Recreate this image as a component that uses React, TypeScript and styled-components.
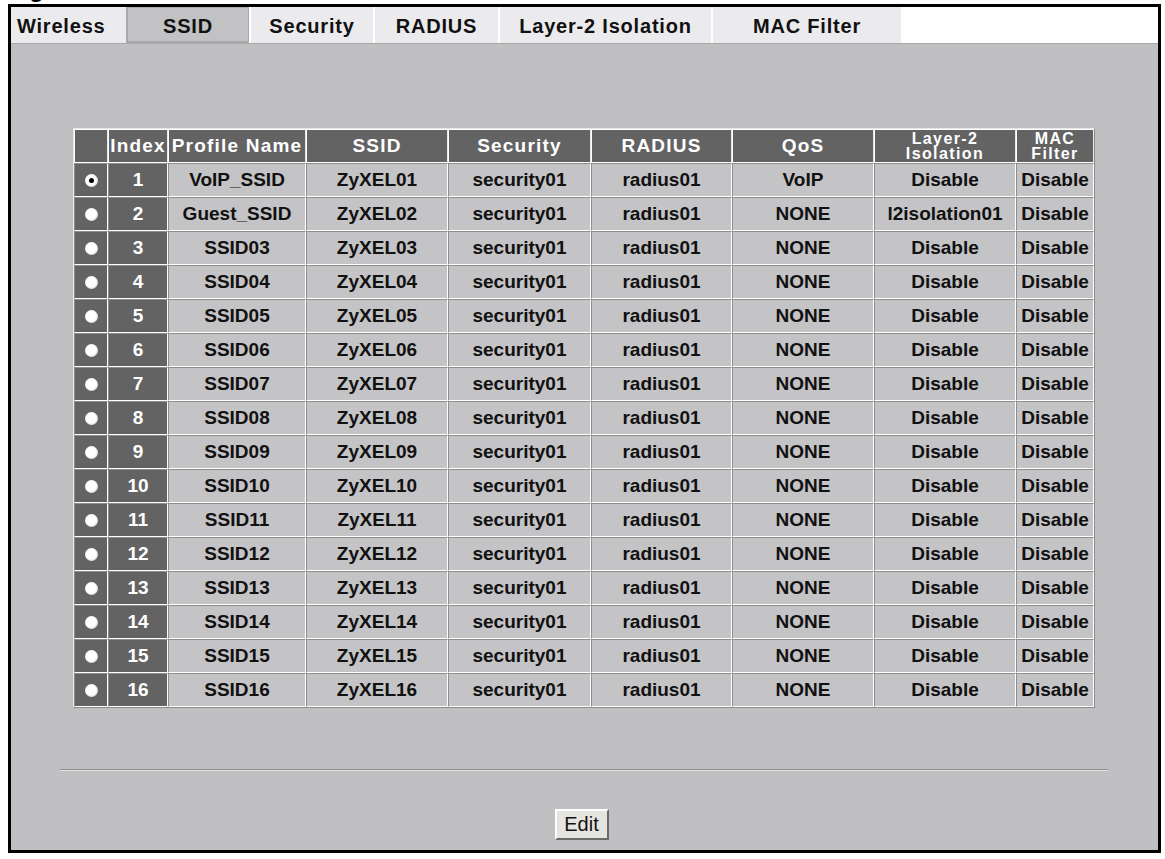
import React from "react";
import styled, { createGlobalStyle } from "styled-components";

const Global = createGlobalStyle`
  html, body { margin: 0; padding: 0; background: #ffffff; }
  body { font-family: "Liberation Sans", Arial, sans-serif; }
`;

const Page = styled.div`
  width: 1165px;
  height: 859px;
  position: relative;
  overflow: hidden;
  background: #fff;
`;

const Caption = styled.div`
  position: absolute;
  left: 8px;
  top: -23px;
  font: bold 24px/1 "Liberation Sans", Arial, sans-serif;
  color: #000;
`;

const Frame = styled.div`
  position: absolute;
  left: 8px;
  top: 4px;
  width: 1147px;
  height: 843px;
  border: 3px solid #000;
  display: flex;
  flex-direction: column;
  background: #c0bfc2;
`;

const TabBar = styled.div`
  display: flex;
  height: 36px;
  background: #ffffff;
  border-bottom: 1px solid #a8a8a8;
`;

const Tab = styled.div<{ $w: number; $active?: boolean }>`
  width: ${(p) => p.$w}px;
  box-sizing: border-box;
  display: flex;
  align-items: center;
  justify-content: center;
  padding-top: 3px;
  font: bold 20px "Liberation Sans", Arial, sans-serif;
  letter-spacing: 0.8px;
  color: #111;
  background: ${(p) => (p.$active ? "#c2c1c4" : "#ebeaec")};
  border-left: 2px solid ${(p) => (p.$active ? "#a9a9ab" : "#ffffff")};
  border-right: ${(p) => (p.$active ? "1px solid #a9a9ab" : "none")};
  border-top: ${(p) => (p.$active ? "1px solid #a9a9ab" : "none")};
  border-bottom: ${(p) => (p.$active ? "2px solid #a9a9ab" : "none")};
  &:first-child { border-left: none; justify-content: flex-start; padding-left: 6px; }
`;

const Content = styled.div`
  flex: 1;
  display: flex;
  flex-direction: column;
  align-items: stretch;
  padding: 84px 0 0 0;
`;

const TableWrap = styled.div`
  margin-left: 62px;
`;

const Table = styled.table`
  border-collapse: separate;
  border-spacing: 0;
  border: 1px solid #e6e6e6;
  border-right-color: #8a8a8a;
  border-bottom-color: #8a8a8a;
  table-layout: fixed;
`;

const Th = styled.th<{ $w: number }>`
  width: ${(p) => p.$w - 2}px;
  height: 32px;
  padding: 0;
  background: #636363;
  color: #ffffff;
  font: bold 19px "Liberation Sans", Arial, sans-serif;
  letter-spacing: 1.2px;
  text-align: center;
  border: 1px solid #ffffff;
  border-right-color: #e8e8e8;
  white-space: nowrap;
  overflow: hidden;
`;

const HeadLine = styled.div<{ $small?: boolean }>`
  font-size: ${(p) => (p.$small ? "16px" : "19px")};
  letter-spacing: ${(p) => (p.$small ? "1.4px" : "1.2px")};
  line-height: ${(p) => (p.$small ? "15px" : "20px")};
`;

const Td = styled.td<{ $dark?: boolean }>`
  height: 32px;
  padding: 0;
  background: ${(p) => (p.$dark ? "#636363" : "#c4c3c6")};
  color: ${(p) => (p.$dark ? "#ffffff" : "#111111")};
  font: bold 19px "Liberation Sans", Arial, sans-serif;
  text-align: center;
  border: 1px solid #ffffff;
  border-left-color: #8e8e8e;
  border-top-color: #8e8e8e;
  white-space: nowrap;
  overflow: hidden;
`;

const Radio = styled.span<{ $on?: boolean }>`
  display: inline-block;
  width: 13px;
  height: 13px;
  border-radius: 50%;
  background: radial-gradient(circle at 45% 45%, #ffffff 50%, #cfcfcf 80%, #9a9a9a 100%);
  position: relative;
  vertical-align: middle;
  &::after {
    content: "";
    display: ${(p) => (p.$on ? "block" : "none")};
    position: absolute;
    left: 4px;
    top: 4px;
    width: 5px;
    height: 5px;
    border-radius: 50%;
    background: #000;
  }
`;

const Rule = styled.div`
  margin: 61px 0 0 49px;
  width: 1048px;
  height: 0;
  border-top: 1px solid #8c8c8c;
  border-bottom: 1px solid #e4e4e4;
`;

const ButtonRow = styled.div`
  display: flex;
  justify-content: center;
  padding-top: 38px;
  padding-right: 6px;
`;

const Button = styled.button`
  width: 54px;
  height: 31px;
  background: #e6e4e0;
  border: 2px solid;
  border-color: #ffffff #6a6a6a #6a6a6a #ffffff;
  font: 20px "Liberation Sans", Arial, sans-serif;
  color: #111;
  padding: 0;
`;

const cols = [
  { t: "", w: 34 },
  { t: "Index", w: 60 },
  { t: "Profile Name", w: 138 },
  { t: "SSID", w: 142 },
  { t: "Security", w: 143 },
  { t: "RADIUS", w: 141 },
  { t: "QoS", w: 142 },
  { t: "Layer-2\nIsolation", w: 142 },
  { t: "MAC\nFilter", w: 78 },
];

const pad = (n: number) => (n < 10 ? "0" + n : "" + n);

const rows = Array.from({ length: 16 }, (_, i) => {
  const n = i + 1;
  return {
    n,
    name: n === 1 ? "VoIP_SSID" : n === 2 ? "Guest_SSID" : "SSID" + pad(n),
    ssid: "ZyXEL" + pad(n),
    sec: "security01",
    rad: "radius01",
    qos: n === 1 ? "VoIP" : "NONE",
    l2: n === 2 ? "l2isolation01" : "Disable",
    mac: "Disable",
  };
});

const tabs = [
  { t: "Wireless", w: 115 },
  { t: "SSID", w: 123, a: true },
  { t: "Security", w: 124 },
  { t: "RADIUS", w: 125 },
  { t: "Layer-2 Isolation", w: 213 },
  { t: "MAC Filter", w: 190 },
];

export default function App() {
  return (
    <Page>
      <Global />
      <Caption>Figure</Caption>
      <Frame>
        <TabBar>
          {tabs.map((t) => (
            <Tab key={t.t} $w={t.w} $active={t.a}>
              {t.t}
            </Tab>
          ))}
        </TabBar>
        <Content>
          <TableWrap>
            <Table>
              <thead>
                <tr>
                  {cols.map((c, i) => {
                    const lines = c.t.split("\n");
                    return (
                      <Th key={i} $w={c.w}>
                        {lines.map((l, j) => (
                          <HeadLine key={j} $small={lines.length > 1}>
                            {l}
                          </HeadLine>
                        ))}
                      </Th>
                    );
                  })}
                </tr>
              </thead>
              <tbody>
                {rows.map((r) => (
                  <tr key={r.n}>
                    <Td $dark>
                      <Radio $on={r.n === 1} />
                    </Td>
                    <Td $dark>{r.n}</Td>
                    <Td>{r.name}</Td>
                    <Td>{r.ssid}</Td>
                    <Td>{r.sec}</Td>
                    <Td>{r.rad}</Td>
                    <Td>{r.qos}</Td>
                    <Td>{r.l2}</Td>
                    <Td>{r.mac}</Td>
                  </tr>
                ))}
              </tbody>
            </Table>
          </TableWrap>
          <Rule />
          <ButtonRow>
            <Button>Edit</Button>
          </ButtonRow>
        </Content>
      </Frame>
    </Page>
  );
}
